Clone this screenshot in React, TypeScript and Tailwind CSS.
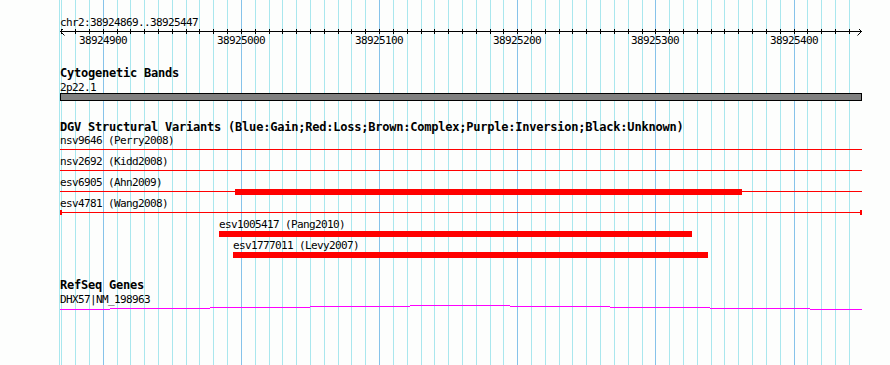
const MINOR = 13.814;
const ORIGIN = 103.3; // x of 38924900

const gridXs: number[] = [];
for (let k = -3; k <= 54; k++) gridXs.push({ k, x: Math.floor(ORIGIN + k * MINOR) } as any);

const majors = [
  { label: "38924900", k: 0 },
  { label: "38925000", k: 10 },
  { label: "38925100", k: 20 },
  { label: "38925200", k: 30 },
  { label: "38925300", k: 40 },
  { label: "38925400", k: 50 },
];

const small = "font-['DejaVu_Sans_Mono',monospace] text-[11px] leading-[13px] tracking-[-0.62px] text-black whitespace-pre";
const bold = "font-['DejaVu_Sans_Mono',monospace] text-[12px] leading-[13px] tracking-[-0.22px] font-bold text-black whitespace-pre";

function Grid() {
  return (
    <svg className="absolute inset-0" width={890} height={365} shapeRendering="crispEdges">
      <rect x={59} y={0} width={1} height={365} fill="#a9e7ee" />
      {(gridXs as any[]).map(({ k, x }) => (
        <rect key={k} x={x} y={0} width={1} height={365} fill={k % 10 === 0 ? "#86c3ea" : "#a9e7ee"} />
      ))}
    </svg>
  );
}

function Axis() {
  return (
    <div className="relative h-[18px] w-[802px]">
      <svg className="absolute left-0 top-0" width={803} height={18} shapeRendering="crispEdges">
        <rect x={0} y={2} width={802} height={1} fill="#000" />
        {(gridXs as any[]).map(({ k, x }) => (
          <rect key={k} x={x - 60} y={0} width={1} height={5} fill="#000" />
        ))}
        <path d="M0.5 2.5 L4.5 -1.5 M0.5 2.5 L4.5 6.5 M801.5 2.5 L797.5 -1.5 M801.5 2.5 L797.5 6.5" stroke="#000" strokeWidth={1} fill="none" shapeRendering="auto" />
      </svg>
      {majors.map((m) => (
        <span
          key={m.label}
          className={`absolute top-[5px] ${small}`}
          style={{ left: Math.floor(ORIGIN + m.k * MINOR) - 60 - 24 }}
        >
          {m.label}
        </span>
      ))}
    </div>
  );
}

function VariantRow({ label, bar, ends }: { label: string; bar?: [number, number]; ends?: boolean }) {
  return (
    <div className="relative h-[21px] w-[802px]">
      <div className={`h-[13px] ${small}`}>{label}</div>
      <div className="mt-[2px] h-px w-[802px] bg-[#ff0000]" />
      {bar && (
        <div
          className="absolute top-[13px] h-[6px] bg-[#ff0000]"
          style={{ left: bar[0], width: bar[1] }}
        />
      )}
      {ends && (
        <>
          <div className="absolute left-0 top-[13px] h-[5px] w-[2px] bg-[#ff0000]" />
          <div className="absolute left-[800px] top-[13px] h-[5px] w-[2px] bg-[#ff0000]" />
        </>
      )}
    </div>
  );
}

function FloatingVariant({ label, left, width }: { label: string; left: number; width: number }) {
  return (
    <div className="h-[21px] w-[802px]" style={{ paddingLeft: left }}>
      <div className={`h-[13px] ${small}`}>{label}</div>
      <div className="h-[6px] bg-[#ff0000]" style={{ width }} />
    </div>
  );
}

const arc: [number, number, number][] = [
  [0, 50, 16],
  [50, 150, 15],
  [150, 250, 14],
  [250, 350, 13],
  [350, 450, 12],
  [450, 550, 13],
  [550, 650, 14],
  [650, 750, 15],
  [750, 802, 16],
];

export default function App() {
  return (
    <div className="relative w-[890px] h-[365px] overflow-hidden bg-[#fdfefd]">
      <Grid />
      <div className="relative flex flex-col pl-[60px]">
        <div className={`pt-[16px] h-[29px] ${small}`}>chr2:38924869..38925447</div>
        <Axis />

        <div className={`mt-[20px] h-[13px] ${bold}`}>Cytogenetic Bands</div>
        <div className={`mt-[1px] h-[12px] ${small}`}>2p22.1</div>
        <div className="h-[8px] w-[802px] border border-black bg-[#808080]" />

        <div className={`mt-[20px] h-[13px] ${bold}`}>
          DGV Structural Variants (Blue:Gain;Red:Loss;Brown:Complex;Purple:Inversion;Black:Unknown)
        </div>
        <VariantRow label="nsv9646 (Perry2008)" />
        <VariantRow label="nsv2692 (Kidd2008)" />
        <VariantRow label="esv6905 (Ahn2009)" bar={[175, 507]} />
        <VariantRow label="esv4781 (Wang2008)" ends />
        <FloatingVariant label="esv1005417 (Pang2010)" left={159} width={473} />
        <FloatingVariant label="esv1777011 (Levy2007)" left={173} width={475} />

        <div className={`mt-[19px] h-[14px] ${bold}`}>RefSeq Genes</div>
        <div className="relative h-[18px] w-[802px]">
          <div className={small}>DHX57|NM_198963</div>
          <svg className="absolute left-0 top-0" width={802} height={18} shapeRendering="crispEdges">
            {arc.map(([a, b, y]) => (
              <rect key={a} x={a} y={y} width={b - a} height={1} fill="#ff00ff" />
            ))}
          </svg>
        </div>
      </div>
    </div>
  );
}
